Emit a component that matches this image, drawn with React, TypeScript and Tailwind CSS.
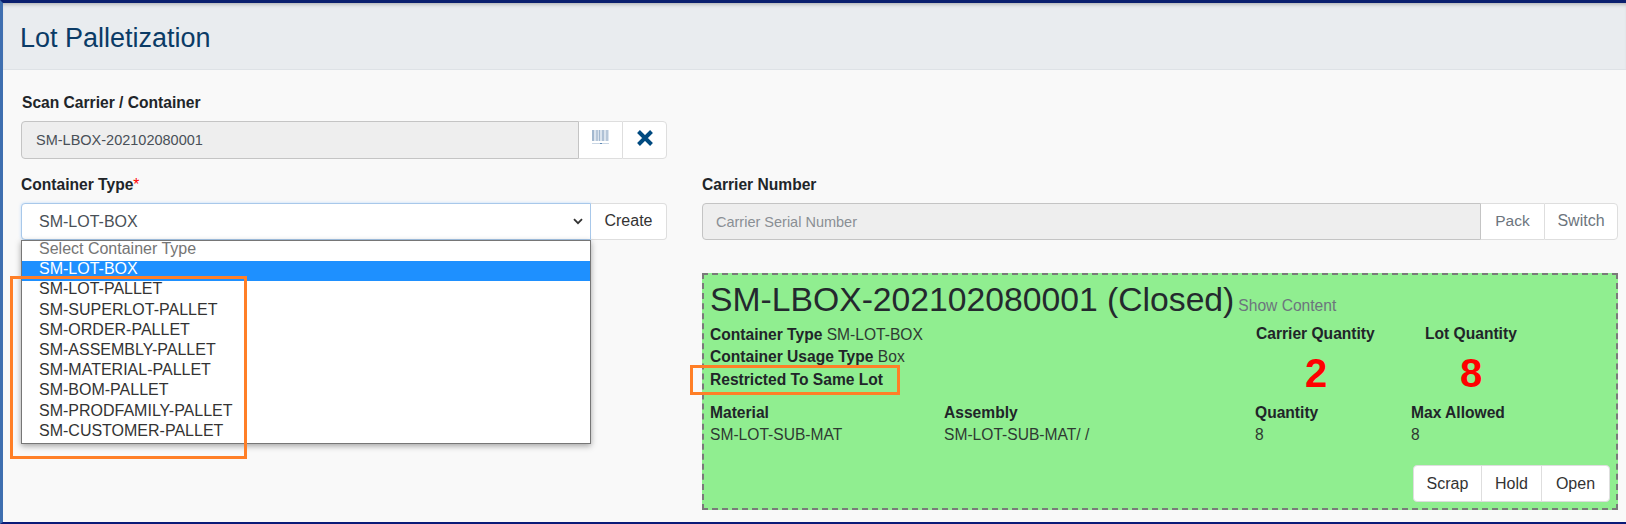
const options = [
  "SM-LOT-PALLET",
  "SM-SUPERLOT-PALLET",
  "SM-ORDER-PALLET",
  "SM-ASSEMBLY-PALLET",
  "SM-MATERIAL-PALLET",
  "SM-BOM-PALLET",
  "SM-PRODFAMILY-PALLET",
  "SM-CUSTOMER-PALLET",
];

function BarcodeIcon() {
  return (
    <svg width="17" height="15" viewBox="0 0 17 15" className="block">
      <rect x="0" y="0" width="17" height="11" fill="#dbe4ee" />
      <rect x="0" y="0" width="2" height="11" fill="#a3b8cf" />
      <rect x="4" y="0" width="2" height="11" fill="#b7c7d9" />
      <rect x="7" y="0" width="1" height="11" fill="#a3b8cf" />
      <rect x="10" y="0" width="2" height="11" fill="#afc1d5" />
      <rect x="14" y="0" width="2" height="11" fill="#b7c7d9" />
      <rect x="0" y="13" width="17" height="1" fill="#c9d6e4" />
      <rect x="8" y="13" width="2" height="1" fill="#5f8ab5" />
    </svg>
  );
}

function CloseIcon() {
  return (
    <svg width="18" height="18" viewBox="0 0 18 18" className="block">
      <path d="M2.5 2.5 L15.5 15.5 M15.5 2.5 L2.5 15.5" stroke="#004a80" strokeWidth="4" fill="none" />
    </svg>
  );
}

export default function App() {
  return (
    <div className="relative w-[1626px] h-[524px] overflow-hidden bg-[#f9f9f9] border-t-[3px] border-b-[2px] border-l-[3px] border-t-[#0a1f6e] border-b-[#0a1a78] border-l-[#3f6fb0] font-['Liberation_Sans',Arial,sans-serif] text-[15.6px] leading-5 text-[#212529]">
      <div className="h-[67px] flex items-center pl-[17px] pt-[4px] bg-[#e9ecef] border-b border-[#dee2e6] shadow-[inset_0_4px_4px_-3px_rgba(0,0,0,0.3)]">
        <h1 className="text-[27px] leading-8 text-[#0b3b66]">Lot Palletization</h1>
      </div>

      <div className="pl-[18px] pr-[5px]">
        <label className="block mt-[23px] mb-[8px] ml-[1px] font-bold">Scan Carrier / Container</label>
        <div className="flex w-[646px] h-[38px]">
          <div className="w-[558px] flex items-center pl-[14px] bg-[#eeeeee] border border-[#c4c4c4] rounded-l-[4px] text-[14.5px] text-[#495057]">
            SM-LBOX-202102080001
          </div>
          <div className="w-[43px] flex items-center justify-center pb-[5px] bg-white border-y border-[#dedede]">
            <BarcodeIcon />
          </div>
          <div className="flex-1 flex items-center justify-center pb-[5px] bg-white border border-[#dedede] rounded-r-[4px]">
            <CloseIcon />
          </div>
        </div>

        <div className="flex gap-[35px] mt-[16px]">
          <div className="relative w-[646px]">
            <label className="block mb-[8px] font-bold">
              Container Type<span className="text-[#ff0000] font-normal">*</span>
            </label>
            <div className="flex h-[37px]">
              <div className="w-[570px] flex items-center justify-between pl-[17px] pr-[7px] bg-white border border-[#a8c8ea] rounded-l-[4px] shadow-[0_0_3px_rgba(128,189,255,0.5)] text-[16px] text-[#495057]">
                <span>SM-LOT-BOX</span>
                <svg width="10" height="7" viewBox="0 0 10 7">
                  <path d="M1 1.2 L5 5.2 L9 1.2" stroke="#333" strokeWidth="1.8" fill="none" />
                </svg>
              </div>
              <div className="flex-1 flex items-center justify-center pb-[1px] bg-white border border-l-0 border-[#dedede] rounded-r-[4px] text-[16px] text-[#333]">
                Create
              </div>
            </div>

            {/* open native select list */}
            <ul className="absolute left-0 top-[65px] z-10 w-[570px] h-[204px] bg-white border border-[#767676] shadow-[0_2px_6px_rgba(0,0,0,0.35)] text-[16px] leading-[16px] text-[#333]">
              <li className="h-[20.2px] pl-[17px] text-[#757575]">Select Container Type</li>
              <li className="h-[20.2px] pl-[17px] bg-[#1e90ff] text-white">SM-LOT-BOX</li>
              {options.map((o) => (
                <li key={o} className="h-[20.2px] pl-[17px]">
                  {o}
                </li>
              ))}
            </ul>
          </div>

          <div className="w-[916px]">
            <label className="block mb-[8px] font-bold">Carrier Number</label>
            <div className="flex h-[37px] text-[#6c757d]">
              <div className="w-[779px] flex items-center pl-[13px] bg-[#eeeeee] border border-[#c4c4c4] rounded-l-[4px] text-[14.5px] text-[#8a8f94]">
                Carrier Serial Number
              </div>
              <div className="w-[63px] flex items-center justify-center pb-[1px] bg-white border-y border-[#dedede] text-[15.5px]">
                Pack
              </div>
              <div className="flex-1 flex items-center justify-center pb-[1px] bg-white border border-[#dedede] rounded-r-[4px] text-[16px]">
                Switch
              </div>
            </div>

            <div className="mt-[33px] h-[237px] bg-[#90ee90] border-2 border-dashed border-[#7a7a7a] pl-[6px] pr-[6px] text-[#2f3a33]">
              <div className="flex items-baseline gap-[4px] mt-[4px] h-[40px]">
                <span className="text-[33.7px] leading-[40px] text-[#24292e]">SM-LBOX-202102080001 (Closed)</span>
                <span className="text-[#6c757d]">Show Content</span>
              </div>

              <div className="grid grid-cols-[546px_169px_1fr] mt-[5px]">
                <div className="leading-[22.3px]">
                  <div>
                    <b className="text-[#212529]">Container Type</b> SM-LOT-BOX
                  </div>
                  <div>
                    <b className="text-[#212529]">Container Usage Type</b> Box
                  </div>
                  <div>
                    <b className="text-[#212529]">Restricted To Same Lot</b>
                  </div>
                </div>
                <div>
                  <div className="font-bold text-[#212529]">Carrier Quantity</div>
                  <div className="w-[120px] text-center text-[40px] leading-[46px] mt-[6px] font-bold text-[#ff0000]">2</div>
                </div>
                <div>
                  <div className="font-bold text-[#212529]">Lot Quantity</div>
                  <div className="w-[92px] text-center text-[40px] leading-[46px] mt-[6px] font-bold text-[#ff0000]">8</div>
                </div>
              </div>

              <div className="grid grid-cols-[234px_311px_156px_1fr] mt-[6px] leading-[22px]">
                <b className="text-[#212529]">Material</b>
                <b className="text-[#212529]">Assembly</b>
                <b className="text-[#212529]">Quantity</b>
                <b className="text-[#212529]">Max Allowed</b>
                <span>SM-LOT-SUB-MAT</span>
                <span>SM-LOT-SUB-MAT/ /</span>
                <span>8</span>
                <span>8</span>
              </div>

              <div className="flex justify-end mt-[19px]">
                <div className="flex h-[37px] bg-white border border-[#dedede] rounded-[4px] text-[16px] text-[#333]">
                  <div className="w-[68px] flex items-center justify-center border-r border-[#dedede]">Scrap</div>
                  <div className="w-[60px] flex items-center justify-center border-r border-[#dedede]">Hold</div>
                  <div className="w-[67px] flex items-center justify-center">Open</div>
                </div>
              </div>
            </div>
          </div>
        </div>
      </div>

      {/* orange callouts drawn over the screenshot */}
      <div className="absolute left-[7px] top-[273px] z-20 w-[237px] h-[183px] border-[3px] border-[#ff7f27]" />
      <div className="absolute left-[687px] top-[362px] z-20 w-[210px] h-[30px] border-[3px] border-[#ff7f27]" />
      {/* window edge gets darker near the bottom corner */}
      <div className="absolute left-[-3px] top-[501px] w-[3px] h-[20px] bg-[#0a1a78]" />
    </div>
  );
}
